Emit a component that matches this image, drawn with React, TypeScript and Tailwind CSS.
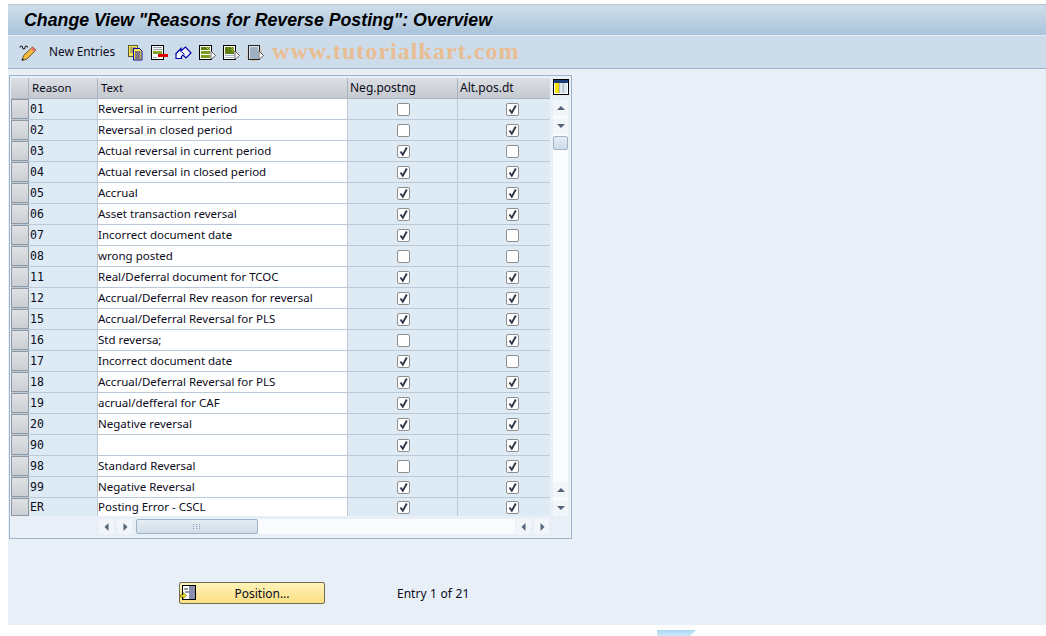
const rows: [string, string, boolean, boolean][] = [
  ['01', 'Reversal in current period', false, true],
  ['02', 'Reversal in closed period', false, true],
  ['03', 'Actual reversal in current period', true, false],
  ['04', 'Actual reversal in closed period', true, true],
  ['05', 'Accrual', true, true],
  ['06', 'Asset transaction reversal', true, true],
  ['07', 'Incorrect document date', true, false],
  ['08', 'wrong posted', false, false],
  ['11', 'Real/Deferral document for TCOC', true, true],
  ['12', 'Accrual/Deferral Rev reason for reversal', true, true],
  ['15', 'Accrual/Deferral Reversal for PLS', true, true],
  ['16', 'Std reversa;', false, true],
  ['17', 'Incorrect document date', true, false],
  ['18', 'Accrual/Deferral Reversal for PLS', true, true],
  ['19', 'acrual/defferal for CAF', true, true],
  ['20', 'Negative reversal', true, true],
  ['90', '', true, true],
  ['98', 'Standard Reversal', false, true],
  ['99', 'Negative Reversal', true, true],
  ['ER', 'Posting Error - CSCL', true, true],
];

function Box({ on }: { on: boolean }) {
  return (
    <span className="w-[13px] h-[13px] flex items-center justify-center bg-white border border-[#8f8f8f] rounded-[2px]">
      {on && (
        <svg width="11" height="11" viewBox="0 0 11 11">
          <path d="M2.500 5.500L4.800 8.800L8.800 1.500" fill="none" stroke="#2f3648" strokeWidth="1.900" />
        </svg>
      )}
    </span>
  );
}

function Cursor() {
  return <path d="M12 7v8.500l4.500-4z" fill="#fff" stroke="#222" strokeWidth="0.700" />;
}

function SelectAllIcon() {
  return (
    <svg width="17" height="17" viewBox="0 0 17 17">
      <rect x="0.500" y="1.500" width="12" height="14" fill="#fff" stroke="#000" />
      <rect x="2" y="3" width="9" height="3" fill="#5f7f12" />
      <rect x="2" y="7" width="9" height="3" fill="#7f9c22" />
      <rect x="2" y="11" width="9" height="3" fill="#7f9c22" />
      <path d="M7 3h1v1H7zM9 3h1v1H9zM8 4h1v1H8zM10 4h1v1h-1zM9 5h1v1H9z" fill="#b6cc55" />
      <Cursor />
    </svg>
  );
}

function SelectBlockIcon() {
  return (
    <svg width="17" height="17" viewBox="0 0 17 17">
      <rect x="0.500" y="1.500" width="12" height="14" fill="#fff" stroke="#000" />
      <rect x="2" y="3" width="9" height="7" fill="#5f7f12" />
      <path d="M8 3h1v1H8zM10 3h1v1h-1zM9 4h1v1H9zM8 5h1v1H8zM10 5h1v1h-1zM9 6h1v1H9z" fill="#a8c040" />
      <rect x="2" y="11" width="9" height="1" fill="#9fb6cc" />
      <rect x="2" y="13" width="9" height="1" fill="#9fb6cc" />
      <Cursor />
    </svg>
  );
}

function DeselectIcon() {
  return (
    <svg width="17" height="17" viewBox="0 0 17 17">
      <circle cx="7" cy="9" r="7.500" fill="none" stroke="#e6b48a" />
      <rect x="1.500" y="1.500" width="11" height="14" fill="#dfe6ec" stroke="#222" />
      <path d="M3 4h8M3 6h8M3 8h8M3 10h8M3 12h8M3 14h8" stroke="#5f7a96" />
      <Cursor />
    </svg>
  );
}

function DeleteIcon() {
  return (
    <svg width="17" height="17" viewBox="0 0 17 17">
      <rect x="0.500" y="1.500" width="12" height="14" fill="#fff" stroke="#000" />
      <path d="M2 3.500h9M2 5.500h9M2 13.500h4" stroke="#98a4ae" />
      <rect x="2" y="7" width="9" height="3" fill="#7f9c22" />
      <path d="M5 7h1v1H5zM7 8h1v1H7zM9 7h1v1H9z" fill="#c2d560" />
      <rect x="7" y="10" width="10" height="3" fill="#e00000" />
    </svg>
  );
}

function Arrow({ d, tall }: { d: string; tall?: boolean }) {
  return (
    <span className={`w-[15px] flex items-center justify-center bg-[#f2f5f9] ${tall ? 'h-[16px]' : 'h-[15px]'}`}>
      <svg width="8" height="8" viewBox="0 0 8 8">
        <path d={d} fill="#56657a" />
      </svg>
    </span>
  );
}

export default function App() {
  return (
    <div className="w-[1046px] h-[636px] bg-white overflow-hidden font-['Noto_Sans',sans-serif] text-[11.5px] text-[#0b0b20] flex flex-col pl-2 pt-1">
      {/* Title */}
      <div className="h-[31px] shrink-0 flex items-center pl-4 bg-gradient-to-b from-[#cfdeeb] to-[#a9c3da] border-t border-[#b9c7d4]">
        <span className="font-['Liberation_Sans',sans-serif] font-bold italic text-[17.75px] text-black">
          Change View "Reasons for Reverse Posting": Overview
        </span>
      </div>

      {/* Toolbar */}
      <div className="h-[34px] shrink-0 flex items-center bg-[#cddcea] border-t border-[#e4edf4] border-b border-b-[#9fb4c8] pl-[11px]">
        <svg width="18" height="17" viewBox="0 0 18 17" className="shrink-0">
          <path d="M1 3.500c0-2 2.500-2 2.500 0s2.500 2 2.500 0 2.500-2 2.500 0" fill="none" stroke="#222" strokeWidth="1.100" />
          <path d="M13.500 3l3.500 3-9 9-5 1.500 1.500-5z" fill="#f6b93f" stroke="#4d3a1a" strokeWidth="0.800" />
          <path d="M13.500 3l3.500 3-1.800 1.800-3.500-3z" fill="#ec6f6f" />
          <path d="M2.500 16.500l0.800-2.500 1.800 1.700z" fill="#222" />
        </svg>
        <span className="ml-[12px] w-[78px] text-[11.8px]">New Entries</span>
        <div className="flex items-center gap-[7px]">
          <svg width="17" height="17" viewBox="0 0 17 17">
            <rect x="1.500" y="1.500" width="9" height="11" fill="#f7e35a" stroke="#5c5c30" />
            <path d="M3 4h6M3 6h3M3 8h3" stroke="#6a6a50" />
            <path d="M6.500 4.500h6l2.500 2.500v9h-8.500z" fill="#ffec4d" stroke="#0000b0" />
            <path d="M8 8h5.500M8 10h5.500M8 12h5.500M8 14h5.500" stroke="#0000b0" />
          </svg>
          <DeleteIcon />
          <svg width="17" height="17" viewBox="0 0 17 17">
            <path d="M1 9.500l5-5v2.500l4.500-4 5.500 6-5 5-3-3-1.500 1.500v2H1z" fill="#f3f6fb" stroke="#0000b0" strokeWidth="1.200" />
            <path d="M6.500 7.500l3 3" stroke="#0000b0" />
          </svg>
          <SelectAllIcon />
          <SelectBlockIcon />
          <DeselectIcon />
        </div>
        <span className="ml-[8px] pb-[2px] font-['Liberation_Serif',serif] font-bold text-[24px] tracking-[1.05px] text-[#e9bd92]">
          www.tutorialkart.com
        </span>
      </div>

      {/* Content */}
      <div className="h-[556px] shrink-0 bg-[#e8eff7] pl-px pt-[6px]">
        <div className="w-[563px] h-[464px] border border-[#9fb4c8] pl-px pt-[2px] flex">
          <div className="w-[539px] shrink-0">
            {/* Header */}
            <div className="flex h-[21px] bg-gradient-to-b from-[#dcdfe3] to-[#c5cad0] border-b border-[#aab6c2]">
              <span className="w-[18px] border-r border-[#aab6c2]" />
              <span className="w-[69px] pl-[3px] border-r border-[#aab6c2] leading-[20px]">Reason</span>
              <span className="w-[250px] pl-[3px] border-r border-[#aab6c2] leading-[20px]">Text</span>
              <span className="w-[110px] pl-[2px] border-r border-[#aab6c2] leading-[20px] text-[12px]">Neg.postng</span>
              <span className="w-[92px] pl-[2px] leading-[20px] text-[12px]">Alt.pos.dt</span>
            </div>
            {/* Rows */}
            {rows.map(([reason, text, neg, alt], i) => {
              const last = i === rows.length - 1;
              return (
                <div key={reason} className={`flex ${last ? 'h-[18px]' : 'h-[21px] border-b border-[#bccad8]'}`}>
                  <span className="w-[18px] bg-gradient-to-b from-[#dfe1e4] to-[#cbced3] border border-[#8e99a4]" />
                  <span className={`w-[69px] pl-[1px] bg-[#deeaf4] font-['DejaVu_Sans_Mono',monospace] border-r border-[#bccad8] ${last ? 'leading-[18px]' : 'leading-[20px]'}`}>{reason}</span>
                  <span className={`w-[250px] bg-white border-r border-[#bccad8] whitespace-nowrap ${last ? 'leading-[18px]' : 'leading-[20px]'}`}>{text}</span>
                  <span className="w-[110px] pl-[49px] bg-[#deeaf4] border-r border-[#bccad8] flex items-center"><Box on={neg} /></span>
                  <span className="w-[92px] pl-[48px] bg-[#deeaf4] flex items-center"><Box on={alt} /></span>
                </div>
              );
            })}
            {/* Horizontal scrollbar */}
            <div className="flex items-center h-[15px] mt-[3px] pl-[88px]">
              <Arrow d="M5.500 0v8L1.500 4z" />
              <span className="w-[3px]" />
              <Arrow d="M2.500 0v8l4-4z" />
              <span className="ml-[4px] w-[122px] h-[15px] flex items-center justify-center bg-gradient-to-b from-[#e6edf4] to-[#cfdce8] border border-[#9fb4c8] rounded-[2px]">
                <svg width="8" height="6" viewBox="0 0 8 6">
                  <path d="M0 0h1v1H0zM3 0h1v1H3zM6 0h1v1H6zM0 2h1v1H0zM3 2h1v1H3zM6 2h1v1H6zM0 4h1v1H0zM3 4h1v1H3zM6 4h1v1H6z" fill="#8fa2b4" />
                </svg>
              </span>
              <span className="w-[257px] h-[15px] bg-[#fafbfc]" />
              <span className="w-[1px]" />
              <Arrow d="M5.500 0v8L1.500 4z" />
              <span className="w-[3px]" />
              <Arrow d="M2.500 0v8l4-4z" />
            </div>
          </div>
          {/* Vertical scrollbar */}
          <div className="w-[21px] shrink-0 flex flex-col pl-[3px]">
            <svg width="16" height="16" viewBox="0 0 16 16" className="mt-[1px]">
              <rect x="0.500" y="0.500" width="15" height="15" fill="#fff" stroke="#000" />
              <rect x="1" y="1" width="14" height="3" fill="#1c3f7a" />
              <rect x="2" y="4" width="4" height="10" fill="#f7e400" />
              <rect x="6.500" y="4" width="3.500" height="10" fill="#dbe6f0" />
              <rect x="10.500" y="4" width="3.500" height="10" fill="#dbe6f0" />
              <path d="M6.250 4v10M10.250 4v10" stroke="#555" strokeWidth="0.500" />
            </svg>
            <div className="mt-[5px] w-[15px] flex flex-col gap-[2px] bg-[#fafbfc] h-[416px]">
              <Arrow tall d="M0 6L4 2l4 4z" />
              <Arrow tall d="M0 2h8L4 6z" />
              <span className="w-[15px] h-[14px] bg-gradient-to-b from-[#e6edf4] to-[#cfdce8] border border-[#9fb4c8] rounded-[2px]" />
              <span className="flex-1" />
              <Arrow tall d="M0 6L4 2l4 4z" />
              <Arrow tall d="M0 2h8L4 6z" />
            </div>
          </div>
        </div>

        {/* Position button */}
        <div className="flex items-center mt-[43px] ml-[170px]">
          <button className="relative w-[146px] h-[22px] pt-px bg-gradient-to-b from-[#fef3b8] to-[#fbdf84] border border-[#6e6e50] rounded-[2px] text-[12px] pl-[20px]">
            <svg width="16" height="16" viewBox="0 0 16 16" className="absolute left-0 top-[2px]">
              <rect x="2.500" y="0.500" width="13" height="14" fill="#fff" stroke="#000" />
              <rect x="9" y="1" width="6" height="13" fill="#8a90ad" />
              <path d="M4 4h4M5 7h4" stroke="#333" />
              <path d="M0 10h3V7.500l3.500 3-3.500 3V12H0z" fill="#f7e400" stroke="#333" strokeWidth="0.500" />
            </svg>
            Position...
          </button>
          <span className="ml-[72px] pt-[2px] text-[12px] [word-spacing:0.5px]">Entry 1 of 21</span>
        </div>
      </div>

      {/* Logo peeking in at the bottom edge */}
      <div className="ml-[649px] mt-[5px] w-[39px] h-[6px] bg-gradient-to-b from-[#a9d8f2] to-[#cbe8f8] [clip-path:polygon(0_0,100%_0,85%_100%,0_100%)]" />
    </div>
  );
}
